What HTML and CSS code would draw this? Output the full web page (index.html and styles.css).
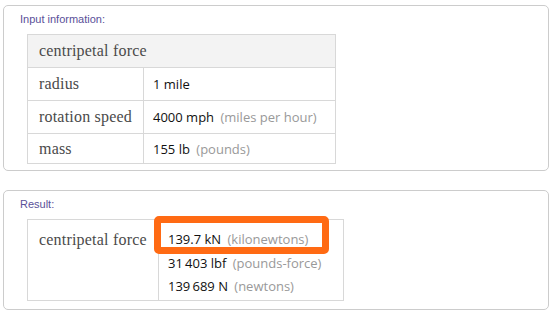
FILE: index.html
```html
<!DOCTYPE html>
<html lang="en">
<head>
    <meta charset="UTF-8">
    <meta name="viewport" content="width=device-width, initial-scale=1.0">
    <title>Centripetal force</title>
    <link rel="stylesheet" href="styles.css">
</head>
<body>
    <div class="pod">
        <div class="pod-title">Input information:</div>
        <table class="input-table">
            <tr class="head-row">
                <th colspan="2">centripetal force</th>
            </tr>
            <tr>
                <td class="label">radius</td>
                <td class="value">1 mile</td>
            </tr>
            <tr>
                <td class="label">rotation speed</td>
                <td class="value">4000 mph <span class="unit">(miles per hour)</span></td>
            </tr>
            <tr class="last-row">
                <td class="label">mass</td>
                <td class="value">155 lb <span class="unit">(pounds)</span></td>
            </tr>
        </table>
    </div>

    <div class="pod">
        <div class="pod-title">Result:</div>
        <table class="result-table">
            <tr>
                <td class="label">centripetal force</td>
                <td class="value">
                    <div class="line highlight">139.7 kN <span class="unit">(kilonewtons)</span></div>
                    <div class="line">31&#8201;403 lbf <span class="unit">(pounds-force)</span></div>
                    <div class="line">139&#8201;689 N <span class="unit">(newtons)</span></div>
                </td>
            </tr>
        </table>
    </div>
</body>
</html>
```

FILE: styles.css
```css
body {
    margin: 0;
    padding: 5px 3px;
    background-color: #fff;
    font-family: "Open Sans", sans-serif;
}
.pod {
    width: 544px;
    border: 1px solid #ccc;
    border-radius: 5px;
    padding: 6px 0 6px 0;
}
.pod + .pod {
    margin-top: 19px;
    padding-bottom: 8px;
}
.pod-title {
    font-family: "Liberation Sans", sans-serif;
    font-size: 11px;
    line-height: 14px;
    color: #5a5099;
    padding-left: 16px;
    margin-bottom: 8px;
}
table {
    border-collapse: collapse;
    margin-left: 23px;
}
td, th {
    border: 1px solid #d8d8d8;
    padding: 0;
}
.label, th {
    font-family: "Liberation Serif", serif;
    font-size: 16px;
    font-weight: normal;
    letter-spacing: 0.2px;
    color: #4a4a4a;
    text-align: left;
    padding-left: 11px;
}
.value {
    font-size: 13px;
    color: #111;
    padding-left: 9px;
}
.unit {
    color: #999;
    margin-left: 3px;
}

/* input table */
.input-table {
    width: 309px;
}
.input-table .label {
    width: 104px;
}
.input-table tr {
    height: 33px;
}
.input-table .last-row {
    height: 30px;
}
.head-row th {
    background-color: #f3f3f3;
}

/* result table */
.result-table {
    width: 317px;
}
.result-table .label {
    width: 119px;
    vertical-align: top;
    padding-top: 8px;
    line-height: 23.5px;
}
.result-table .value {
    vertical-align: top;
    padding-top: 8px;
    padding-bottom: 1px;
}
.line {
    line-height: 23.5px;
}
.highlight {
    position: relative;
}
.highlight::after {
    content: "";
    position: absolute;
    left: -14px;
    top: -12px;
    width: 175px;
    height: 38px;
    box-sizing: border-box;
    border: 7px solid #ff6a13;
    border-radius: 5px;
}
```
